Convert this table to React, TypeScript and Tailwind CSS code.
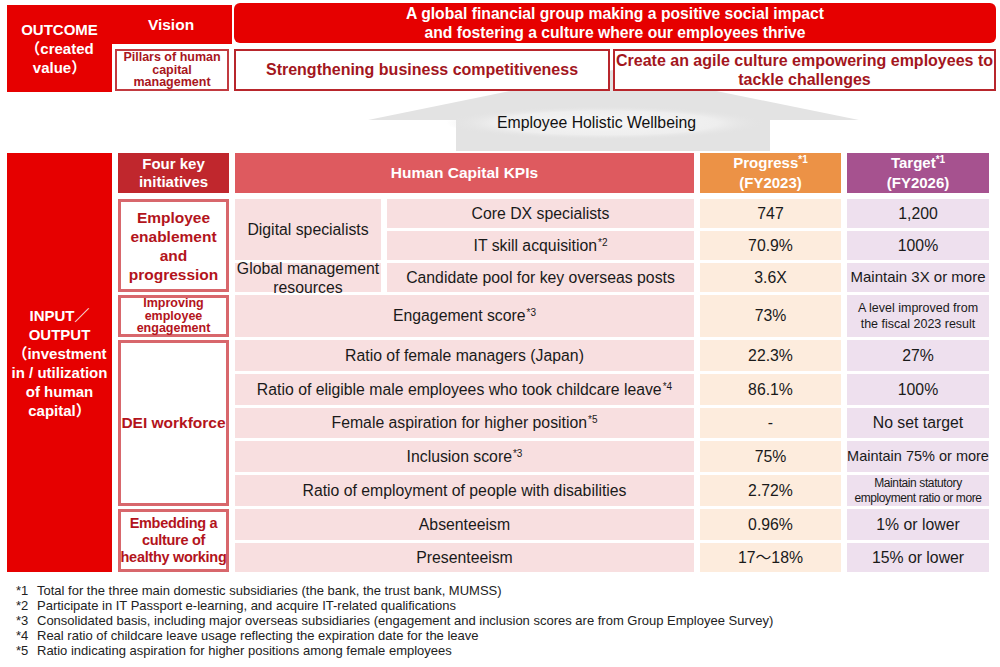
import React from "react";

const FONT = { fontFamily: '"Liberation Sans", Arial, "Noto Sans CJK JP", sans-serif' };

interface KpiRow {
  kpi: React.ReactNode;
  progress: string;
  target: React.ReactNode;
  wide?: boolean;
}

const Sup = ({ n }: { n: string }) => <sup className="text-[10px] ml-[1px]">*{n}</sup>;

const rows: KpiRow[] = [
  { kpi: "Core DX specialists", progress: "747", target: "1,200" },
  { kpi: <>IT skill acquisition<Sup n="2" /></>, progress: "70.9%", target: "100%" },
  { kpi: "Candidate pool for key overseas posts", progress: "3.6X", target: <span className="whitespace-nowrap text-[15px]">Maintain 3X or more</span> },
  {
    kpi: <>Engagement score<Sup n="3" /></>,
    progress: "73%",
    target: <span className="text-[12.5px] leading-[16px]">A level improved from<br />the fiscal 2023 result</span>,
    wide: true,
  },
  { kpi: "Ratio of female managers (Japan)", progress: "22.3%", target: "27%", wide: true },
  { kpi: <>Ratio of eligible male employees who took childcare leave<Sup n="4" /></>, progress: "86.1%", target: "100%", wide: true },
  { kpi: <>Female aspiration for higher position<Sup n="5" /></>, progress: "-", target: "No set target", wide: true },
  { kpi: <>Inclusion score<Sup n="3" /></>, progress: "75%", target: <span className="whitespace-nowrap text-[14.5px]">Maintain 75% or more</span>, wide: true },
  {
    kpi: "Ratio of employment of people with disabilities",
    progress: "2.72%",
    target: <span className="text-[12px] leading-[15px] tracking-[-0.4px] whitespace-nowrap">Maintain statutory<br />employment ratio or more</span>,
    wide: true,
  },
  { kpi: "Absenteeism", progress: "0.96%", target: "1% or lower", wide: true },
  { kpi: "Presenteeism", progress: "17〜18%", target: "15% or lower", wide: true },
];

const rowStart = [
  "row-start-2", "row-start-3", "row-start-4", "row-start-5", "row-start-6", "row-start-7",
  "row-start-8", "row-start-9", "row-start-10", "row-start-11", "row-start-12",
];

const footnotes = [
  ["*1", "Total for the three main domestic subsidiaries (the bank, the trust bank, MUMSS)"],
  ["*2", "Participate in IT Passport e-learning, and acquire IT-related qualifications"],
  ["*3", "Consolidated basis, including major overseas subsidiaries (engagement and inclusion scores are from Group Employee Survey)"],
  ["*4", "Real ratio of childcare leave usage reflecting the expiration date for the leave"],
  ["*5", "Ratio indicating aspiration for higher positions among female employees"],
];

const initiativeBox =
  "border-[3px] border-[#d8676c] bg-white flex items-center justify-center text-center font-bold text-[#b3141c]";

export default function App() {
  return (
    <div className="relative w-[1000px] h-[667px] bg-white overflow-hidden text-[#1a1a1a]" style={FONT}>
      {/* Wellbeing arrow, sits behind the pillar boxes */}
      <svg className="absolute left-0 top-0 z-0" width="1000" height="160">
        <defs>
          <radialGradient id="glow" cx="0.5" cy="0.5" r="0.5">
            <stop offset="0%" stopColor="#f6f6f6" />
            <stop offset="70%" stopColor="#eeeeee" />
            <stop offset="100%" stopColor="#e3e3e3" stopOpacity="0" />
          </radialGradient>
        </defs>
        <polygon points="613,70 859,120 770,120 770,151 456,151 456,120 368,120" fill="#e3e3e3" />
        <ellipse cx="606" cy="123" rx="160" ry="17" fill="url(#glow)" />
      </svg>
      <div className="absolute left-[497px] top-[113px] z-10 text-[15.8px] leading-[20px] text-[#111]">
        Employee Holistic Wellbeing
      </div>

      {/* Outcome section */}
      <div className="relative z-10 flex items-start pl-[7px] pt-[3px]">
        <div className="flex mt-[2px] h-[87px]">
          <div className="w-[105px] h-[87px] bg-[#e60000] flex flex-col items-center justify-center text-white font-bold text-[15px] leading-[19px] text-center">
            <span>OUTCOME</span>
            <span>（created</span>
            <span>value）</span>
          </div>
          <div className="w-[120px] flex flex-col">
            <div className="h-[39px] bg-[#e60000] text-white font-bold text-[15.5px] flex items-center justify-center pr-[2px]">
              Vision
            </div>
            <div className="ml-[3px] mt-[5px] w-[114px] h-[42px] border-2 border-[#c23a40] flex items-center justify-center text-center text-[#a8161d] font-bold text-[12.5px] leading-[12.5px]">
              Pillars of human<br />capital<br />management
            </div>
          </div>
        </div>
        <div className="ml-[2px] w-[762px] flex flex-col">
          <div className="h-[40px] rounded-[6px] bg-[#e60000] text-white font-bold text-[15.7px] leading-[19px] flex flex-col items-center justify-center">
            <span>A global financial group making a positive social impact</span>
            <span>and fostering a culture where our employees thrive</span>
          </div>
          <div className="mt-[6px] flex gap-[3px]">
            <div className="w-[376px] h-[42px] bg-white border-2 border-[#b8262c] flex items-center justify-center text-[#a3161d] font-bold text-[16px]">
              Strengthening business competitiveness
            </div>
            <div className="flex-1 h-[42px] bg-white border-2 border-[#b8262c] flex items-center justify-center text-center text-[#a3161d] font-bold text-[16px] leading-[19px]">
              Create an agile culture empowering employees to<br />tackle challenges
            </div>
          </div>
        </div>
      </div>

      {/* KPI table */}
      <div className="relative z-10 mt-[61px] ml-[7px] grid grid-cols-[105px_111px_146px_307px_141px_142px] grid-rows-[43px_29px_29px_29px_42px_31px_31px_30px_31px_31px_31px_29px] gap-x-[6px] gap-y-[3px] text-[15.8px]">
        <div className="col-start-1 row-start-1 row-span-12 bg-[#e60000] flex flex-col items-center justify-center text-white font-bold text-[15px] leading-[19px] text-center">
          <span>INPUT／</span>
          <span>OUTPUT</span>
          <span>（investment</span>
          <span className="whitespace-nowrap">in / utilization</span>
          <span>of human</span>
          <span>capital）</span>
        </div>

        <div className="col-start-2 row-start-1 self-start h-[40px] bg-[#c0272d] text-white font-bold text-[15px] leading-[18px] flex items-center justify-center text-center">
          Four key<br />initiatives
        </div>
        <div className="col-start-3 col-span-2 row-start-1 self-start h-[40px] bg-[#de5a5f] text-white font-bold text-[15.5px] flex items-center justify-center">
          Human Capital KPIs
        </div>
        <div className="col-start-5 row-start-1 self-start h-[40px] bg-[#ec9246] text-white font-bold text-[15px] leading-[20px] flex flex-col items-center justify-center">
          <span>Progress<sup className="text-[10px]">*1</sup></span>
          <span>(FY2023)</span>
        </div>
        <div className="col-start-6 row-start-1 self-start h-[40px] bg-[#a6528f] text-white font-bold text-[15px] leading-[20px] flex flex-col items-center justify-center">
          <span>Target<sup className="text-[10px]">*1</sup></span>
          <span>(FY2026)</span>
        </div>

        {/* initiatives */}
        <div className={`col-start-2 row-start-2 row-span-3 ${initiativeBox} text-[15.5px] leading-[19px]`}>
          Employee<br />enablement<br />and<br />progression
        </div>
        <div className={`col-start-2 row-start-5 ${initiativeBox} text-[12.5px] leading-[12.5px]`}>
          Improving<br />employee<br />engagement
        </div>
        <div className={`col-start-2 row-start-6 row-span-5 ${initiativeBox} text-[15.5px] whitespace-nowrap`}>
          DEI workforce
        </div>
        <div className={`col-start-2 row-start-11 row-span-2 ${initiativeBox} text-[14.5px] leading-[17px] tracking-[-0.3px] whitespace-nowrap`}>
          Embedding a<br />culture of<br />healthy working
        </div>

        {/* KPI groups */}
        <div className="col-start-3 row-start-2 row-span-2 bg-[#f8dfe0] flex items-center justify-center">
          Digital specialists
        </div>
        <div className="col-start-3 row-start-4 bg-[#f8dfe0] flex items-center justify-center text-center leading-[19px]">
          Global management<br />resources
        </div>

        {rows.map((r, i) => (
          <React.Fragment key={i}>
            <div
              className={`${rowStart[i]} ${r.wide ? "col-start-3 col-span-2" : "col-start-4"} bg-[#f8dfe0] flex items-center justify-center whitespace-nowrap`}
            >
              <span>{r.kpi}</span>
            </div>
            <div className={`${rowStart[i]} col-start-5 bg-[#fdecdd] flex items-center justify-center`}>
              {r.progress}
            </div>
            <div className={`${rowStart[i]} col-start-6 bg-[#eee0ee] flex items-center justify-center text-center`}>
              {r.target}
            </div>
          </React.Fragment>
        ))}
      </div>

      {/* footnotes */}
      <div className="mt-[11px] pl-[16px] text-[13px] leading-[15px] text-[#222]">
        {footnotes.map(([n, t]) => (
          <div key={n} className="flex">
            <span className="w-[21px] shrink-0">{n}</span>
            <span>{t}</span>
          </div>
        ))}
      </div>
    </div>
  );
}
